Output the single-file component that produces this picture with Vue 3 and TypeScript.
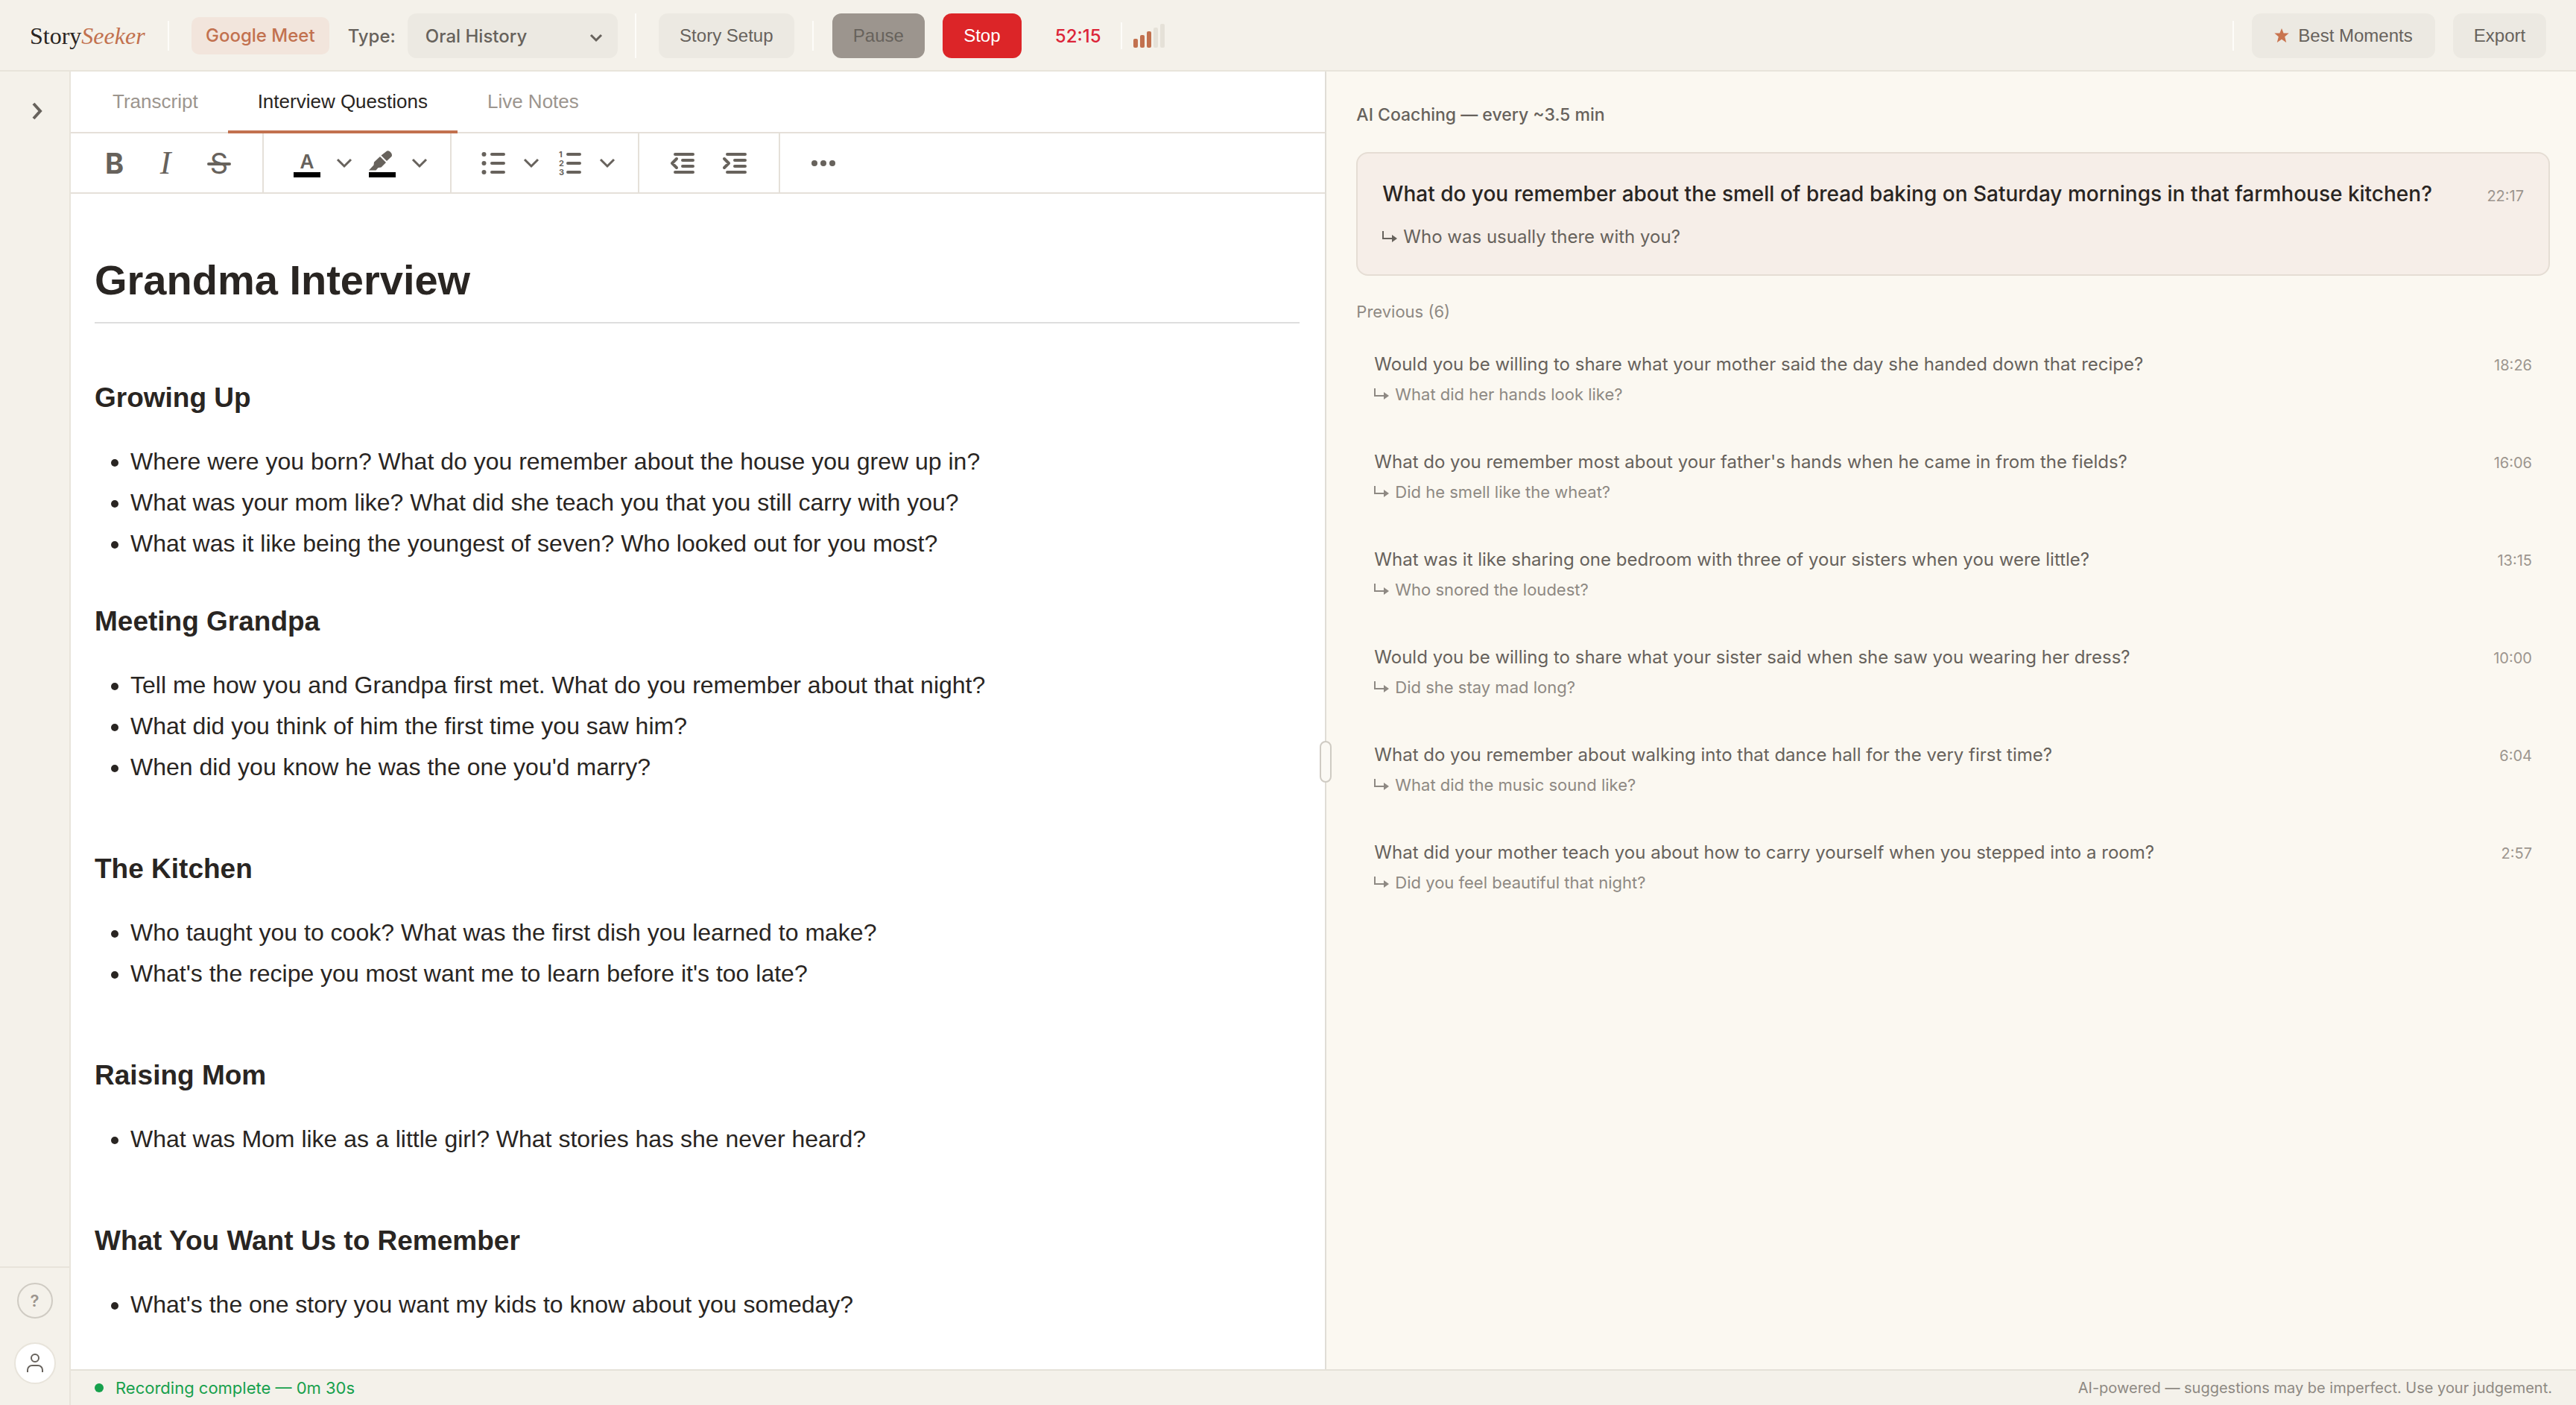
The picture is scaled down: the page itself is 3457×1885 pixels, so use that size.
<script setup lang="ts">
import { ref } from 'vue'

interface Section { title: string; spaced: boolean; questions: string[] }
interface Suggestion { question: string; followUp: string; time: string }

const storyType = ref('Oral History')
const activeTab = ref('Interview Questions')
const tabs = ['Transcript', 'Interview Questions', 'Live Notes']
const levels = [12, 17, 22, 27, 32]

const sections: Section[] = [
  {
    title: 'Growing Up',
    spaced: false,
    questions: [
      'Where were you born? What do you remember about the house you grew up in?',
      'What was your mom like? What did she teach you that you still carry with you?',
      'What was it like being the youngest of seven? Who looked out for you most?',
    ],
  },
  {
    title: 'Meeting Grandpa',
    spaced: true,
    questions: [
      'Tell me how you and Grandpa first met. What do you remember about that night?',
      'What did you think of him the first time you saw him?',
      "When did you know he was the one you'd marry?",
    ],
  },
  {
    title: 'The Kitchen',
    spaced: true,
    questions: [
      'Who taught you to cook? What was the first dish you learned to make?',
      "What's the recipe you most want me to learn before it's too late?",
    ],
  },
  {
    title: 'Raising Mom',
    spaced: true,
    questions: ['What was Mom like as a little girl? What stories has she never heard?'],
  },
  {
    title: 'What You Want Us to Remember',
    spaced: false,
    questions: ["What's the one story you want my kids to know about you someday?"],
  },
]

const previous: Suggestion[] = [
  { question: 'Would you be willing to share what your mother said the day she handed down that recipe?', followUp: 'What did her hands look like?', time: '18:26' },
  { question: "What do you remember most about your father's hands when he came in from the fields?", followUp: 'Did he smell like the wheat?', time: '16:06' },
  { question: 'What was it like sharing one bedroom with three of your sisters when you were little?', followUp: 'Who snored the loudest?', time: '13:15' },
  { question: 'Would you be willing to share what your sister said when she saw you wearing her dress?', followUp: 'Did she stay mad long?', time: '10:00' },
  { question: 'What do you remember about walking into that dance hall for the very first time?', followUp: 'What did the music sound like?', time: '6:04' },
  { question: 'What did your mother teach you about how to carry yourself when you stepped into a room?', followUp: 'Did you feel beautiful that night?', time: '2:57' },
]
</script>

<template>
  <div class="app">
    <header class="topbar">
      <div class="logo">Story<em>Seeker</em></div>
      <span class="rule"></span>
      <span class="pill">Google Meet</span>
      <label class="type-label" for="story-type">Type:</label>
      <div class="select-wrap">
        <select id="story-type" v-model="storyType">
          <option>Oral History</option>
        </select>
        <svg class="select-arrow" viewBox="0 0 18 12" width="18" height="12"><path d="M2 2l7 7 7-7" /></svg>
      </div>
      <span class="rule tall"></span>
      <button type="button" class="btn setup">Story Setup</button>
      <span class="rule"></span>
      <button type="button" class="btn pause" disabled>Pause</button>
      <button type="button" class="btn stop">Stop</button>
      <span class="timer">52:15</span>
      <span class="rule short"></span>
      <div class="meter" role="img" aria-label="Audio level">
        <i v-for="(h, n) in levels" :key="h" :class="{ on: n < 3 }" :style="{ height: h + 'px' }"></i>
      </div>
      <div class="right-tools">
        <span class="rule"></span>
        <button type="button" class="btn best">
          <svg viewBox="0 0 20 20" width="20" height="20"><path d="M10 0l2.600 6.500h7.100l-5.500 4.800 2 7.700L10 14.800l-6.200 4.200 2-7.700L.3 6.500h7.100z" /></svg>
          Best Moments
        </button>
        <button type="button" class="btn export">Export</button>
      </div>
    </header>

    <aside class="rail">
      <button type="button" class="expand" aria-label="Expand sidebar">
        <svg viewBox="0 0 16 26" width="16" height="26"><path d="M3 3l9 10-9 10" /></svg>
      </button>
      <div class="rail-foot">
        <button type="button" class="help">?</button>
        <button type="button" class="user" aria-label="Account">
          <svg viewBox="0 0 24 28" width="24" height="28"><circle cx="12" cy="7" r="5" /><path d="M2 26v-3a6 6 0 0 1 6-6h8a6 6 0 0 1 6 6v3" /></svg>
        </button>
      </div>
    </aside>

    <main class="panes">
      <section class="editor">
        <nav class="tabs">
          <button v-for="t in tabs" :key="t" type="button" :class="{ active: t === activeTab }" @click="activeTab = t">{{ t }}</button>
        </nav>
        <div class="toolbar">
          <div class="group g-text">
            <button type="button" class="tool bold">B</button>
            <button type="button" class="tool italic">I</button>
            <button type="button" class="tool strike">S</button>
          </div>
          <div class="group g-pick">
            <button type="button" class="tool color">A</button>
            <button type="button" class="drop" aria-label="Text colours"><svg viewBox="0 0 22 14" width="22" height="14"><path d="M2 2l9 9 9-9" /></svg></button>
            <button type="button" class="tool color" aria-label="Highlight">
              <svg class="pen" viewBox="0 0 32 27" width="32" height="27"><path d="M23 1.500q3-2.500 6 .500t1.500 6l-6.500 6-7.500-7.500z" /><path d="M15 8l8 8-6.500 6.500-4 .5-3 3.500L0 26.500l6.500-7 .5-4z" /></svg>
            </button>
            <button type="button" class="drop" aria-label="Highlight colours"><svg viewBox="0 0 22 14" width="22" height="14"><path d="M2 2l9 9 9-9" /></svg></button>
          </div>
          <div class="group g-pick">
            <button type="button" class="tool" aria-label="Bullet list">
              <svg class="lines" viewBox="0 0 32 32" width="32" height="32"><path d="M14 4h16M14 16h16M14 28h16" /><circle cx="3.500" cy="4" r="3" /><circle cx="3.500" cy="16" r="3" /><circle cx="3.500" cy="28" r="3" /></svg>
            </button>
            <button type="button" class="drop" aria-label="Bullet styles"><svg viewBox="0 0 22 14" width="22" height="14"><path d="M2 2l9 9 9-9" /></svg></button>
            <button type="button" class="tool" aria-label="Numbered list">
              <svg class="lines" viewBox="0 -4 32 40" width="32" height="40"><path d="M14 4h16M14 16h16M14 28h16" /><text x="2" y="8">1</text><text x="2" y="20">2</text><text x="2" y="32">3</text></svg>
            </button>
            <button type="button" class="drop" aria-label="Number styles"><svg viewBox="0 0 22 14" width="22" height="14"><path d="M2 2l9 9 9-9" /></svg></button>
          </div>
          <div class="group g-indent">
            <button type="button" class="tool" aria-label="Outdent">
              <svg class="lines" viewBox="0 0 34 32" width="34" height="32"><path d="M7 4h24M17 12h14M17 20h14M7 28h24M9 10l-6 6 6 6" /></svg>
            </button>
            <button type="button" class="tool" aria-label="Indent">
              <svg class="lines" viewBox="0 0 34 32" width="34" height="32"><path d="M7 4h24M17 12h14M17 20h14M7 28h24M3 10l6 6-6 6" /></svg>
            </button>
          </div>
          <div class="group g-more">
            <button type="button" class="tool" aria-label="More"><svg class="dots" viewBox="0 0 32 8" width="32" height="8"><circle cx="4" cy="4" r="4" /><circle cx="16" cy="4" r="4" /><circle cx="28" cy="4" r="4" /></svg></button>
          </div>
        </div>
        <article class="doc">
          <h1>Grandma Interview</h1>
          <section v-for="s in sections" :key="s.title" :class="{ spaced: s.spaced }">
            <h2>{{ s.title }}</h2>
            <ul>
              <li v-for="q in s.questions" :key="q">{{ q }}</li>
            </ul>
          </section>
        </article>
      </section>

      <div class="splitter"><span class="grip"></span></div>

      <section class="coach">
        <h2 class="coach-title">AI Coaching — every ~3.5 min</h2>
        <div class="card">
          <div class="row">
            <p class="lead">What do you remember about the smell of bread baking on Saturday mornings in that farmhouse kitchen?</p>
            <time>22:17</time>
          </div>
          <p class="follow"><svg class="turn" viewBox="0 0 20 16" width="20" height="16"><path d="M1 0v10h14" /><path class="tip" d="M13 5l7 5-7 5z" /></svg>Who was usually there with you?</p>
        </div>
        <h3 class="prev-title">Previous (6)</h3>
        <ul class="prev">
          <li v-for="p in previous" :key="p.time">
            <div class="row">
              <p class="question">{{ p.question }}</p>
              <time>{{ p.time }}</time>
            </div>
            <p class="follow"><svg class="turn" viewBox="0 0 20 16" width="20" height="16"><path d="M1 0v10h14" /><path class="tip" d="M13 5l7 5-7 5z" /></svg>{{ p.followUp }}</p>
          </li>
        </ul>
      </section>
    </main>

    <footer class="status">
      <span class="state"><i></i>Recording complete — 0m 30s</span>
      <span class="note">AI-powered — suggestions may be imperfect. Use your judgement.</span>
    </footer>
  </div>
</template>

<style>
body { margin: 0; background: #fbf8f1; }
</style>

<style scoped>
* { box-sizing: border-box; }
.app {
  display: grid;
  grid-template-columns: 95px minmax(0, 1fr);
  grid-template-rows: 96px minmax(0, 1fr) 48px;
  min-height: 100vh;
  font-family: Inter, "Liberation Sans", sans-serif;
  color: #292522;
}
button { margin: 0; padding: 0; border: 0; background: none; font: inherit; color: inherit; cursor: pointer; }
h1, h2, h3, p, ul { margin: 0; padding: 0; }
svg { display: block; fill: none; }

.topbar {
  grid-column: 1 / 3;
  display: flex;
  align-items: center;
  padding: 2px 40px 0;
  border-bottom: 2px solid #e8e4db;
  background: #f4f1ea;
  color: #67625c;
  font-size: 24px;
  white-space: nowrap;
}
.logo { width: 185px; font-family: "Liberation Serif", serif; font-size: 32px; line-height: 40px; color: #292522; }
.logo em { color: #c2714f; }
.rule { width: 2px; height: 40px; background: #fdfcf9; flex: none; }
.rule.tall { height: 60px; margin-left: 23px; }
.rule.short { height: 36px; margin-left: 24px; }
.pill { margin-left: 30px; padding: 0 19px; border-radius: 10px; background: #f2e5dc; color: #c2714f; font-size: 24px; font-weight: 500; line-height: 50px; }
.type-label { margin-left: 25px; font-weight: 500; }
.select-wrap { position: relative; width: 282px; margin-left: 16px; }
select {
  width: 100%;
  height: 60px;
  padding: 0 24px;
  border: 0;
  border-radius: 12px;
  background: #ece9e2;
  color: #67625c;
  font: 500 24px Inter, sans-serif;
  appearance: none;
}
.select-arrow { position: absolute; right: 20px; top: 27px; pointer-events: none; stroke: #67625c; stroke-width: 3; }
.btn { height: 60px; border-radius: 12px; background: #ece9e2; font: 24px "Liberation Sans", sans-serif; color: #67625c; }
.setup { width: 182px; margin: 0 24px 0 30px; }
.pause { width: 124px; margin: 0 24px 0 25px; background: #9c958e; }
.stop { width: 106px; background: #dc2528; color: #fff; }
.timer { min-width: 64px; margin-left: 45px; color: #dc2538; font-size: 24px; font-weight: 500; }
.meter { display: flex; align-items: flex-end; gap: 3px; height: 32px; margin-left: 15px; }
.meter i { width: 6px; border-radius: 2px; background: #e5e1d8; }
.meter i.on { background: #c2714f; }
.right-tools { display: flex; align-items: center; gap: 24px; margin-left: auto; }
.best { display: flex; align-items: center; justify-content: center; gap: 12px; width: 246px; }
.best svg { fill: #c9744e; }
.export { width: 125px; }

.rail {
  grid-row: 2 / 4;
  display: flex;
  flex-direction: column;
  justify-content: space-between;
  border-right: 2px solid #e8e4db;
  background: #f4f1ea;
}
.expand { align-self: center; margin-top: 40px; padding-left: 6px; }
.expand svg { stroke: #67625c; stroke-width: 4; }
.rail-foot {
  display: flex;
  flex-direction: column;
  align-items: center;
  gap: 32px;
  padding: 20px 0 28px;
  border-top: 2px solid #e8e4db;
}
.help { width: 48px; height: 48px; border: 2px solid #cfcbc3; border-radius: 50%; color: #9c958e; font-size: 22px; font-weight: 600; }
.user { display: grid; place-items: center; width: 56px; height: 56px; border: 2px solid #e8e4db; border-radius: 50%; background: #fff; }
.user svg { stroke: #67625c; stroke-width: 2; }

.panes { display: grid; grid-template-columns: minmax(0, 501fr) 2px minmax(0, 499fr); min-width: 0; }
.editor { background: #fff; font-family: "Liberation Sans", sans-serif; }
.tabs { display: flex; height: 83px; padding-left: 16px; border-bottom: 2px solid #e5e0d9; }
.tabs button { height: 83px; padding: 0 40px 2px; border-top: 4px solid transparent; border-bottom: 4px solid transparent; color: #9c958e; font-size: 26px; }
.tabs .active { border-bottom-color: #c2714f; color: #292522; }
.toolbar { display: flex; height: 81px; border-bottom: 2px solid #e5e0d9; color: #67625c; }
.group { display: flex; align-items: center; justify-content: space-between; border-right: 2px solid #e5e0d9; }
.g-text { width: 259px; padding: 0 42px 0 46px; }
.g-pick { width: 252px; padding: 0 30px 0 40px; }
.g-indent { width: 189px; padding: 0 42px 0 41px; }
.g-more { padding: 0 42px; border-right: 0; }
.tool { position: relative; line-height: 60px; text-align: center; }
.bold { font-family: Inter, sans-serif; font-size: 38px; font-weight: 700; }
.italic { font-family: "Liberation Serif", serif; font-size: 44px; font-style: italic; }
.strike { width: 32px; font-family: Inter, sans-serif; font-size: 38px; }
.strike::after { content: ""; position: absolute; left: 0; right: 0; top: 29px; height: 4px; border-radius: 2px; background: #67625c; }
.color { width: 36px; height: 38px; border-bottom: 7px solid #000; font-family: Inter, sans-serif; font-size: 26px; font-weight: 600; line-height: 34px; }
.drop svg { stroke: #67625c; stroke-width: 3; }
.pen { fill: #67625c; }
.lines { stroke: #67625c; stroke-width: 4; stroke-linecap: round; stroke-linejoin: round; }
.lines circle, .lines text { fill: #67625c; stroke: none; }
.lines text { font: 700 11px Inter, sans-serif; }
.dots { fill: #67625c; }

.doc { padding: 84px 34px 40px 32px; }
.doc h1 { padding-bottom: 24px; border-bottom: 2px solid #dedede; margin-bottom: 76px; font-size: 56px; line-height: 64px; }
.doc h2 { margin-bottom: 34px; font-size: 37px; line-height: 48px; }
.doc ul { margin-bottom: 53px; padding-left: 48px; font-size: 32px; line-height: 55px; }
.doc .spaced ul { margin-bottom: 85px; }
.doc section:last-child ul { margin-bottom: 0; }

.splitter { position: relative; background: #e0ddd6; }
.grip { position: absolute; left: -7px; top: calc(53% - 25px); width: 16px; height: 56px; border: 2px solid #cfcbc3; border-radius: 8px; background: #fbf9f4; }

.coach { padding: 40px 35px 40px 40px; background: #fbf8f1; color: #67625c; }
.coach-title { font-size: 23px; font-weight: 500; line-height: 36px; }
.card { margin-top: 32px; padding: 34px 33px 32px; border: 2px solid #e5ddd4; border-radius: 16px; background: #f6eee8; }
.row { display: flex; justify-content: space-between; align-items: baseline; }
time { color: #9c958e; font-size: 20px; }
.lead { color: #292522; font-size: 28px; font-weight: 500; line-height: 40px; }
.follow { display: flex; align-items: center; gap: 8px; }
.turn { stroke: currentColor; stroke-width: 2; }
.tip { fill: currentColor; stroke: none; }
.card .follow { margin-top: 20px; font-size: 24px; line-height: 36px; }
.prev-title { margin-top: 32px; color: #8e8983; font-size: 22px; font-weight: 400; line-height: 32px; }
.prev { margin-top: 35px; padding: 0 24px; list-style: none; }
.prev li { margin-bottom: 51px; }
.question { font-size: 24px; line-height: 40px; }
.prev .follow { color: #8e8983; font-size: 22px; line-height: 40px; }

.status {
  display: flex;
  align-items: center;
  justify-content: space-between;
  padding: 0 32px;
  border-top: 2px solid #e5e1d8;
  background: #f4f1ea;
}
.state { display: flex; align-items: center; gap: 16px; color: #16a04c; font-size: 22px; }
.state i { width: 12px; height: 12px; border-radius: 50%; background: #16a04c; }
.note { color: #8e8983; font-size: 20px; }
</style>
